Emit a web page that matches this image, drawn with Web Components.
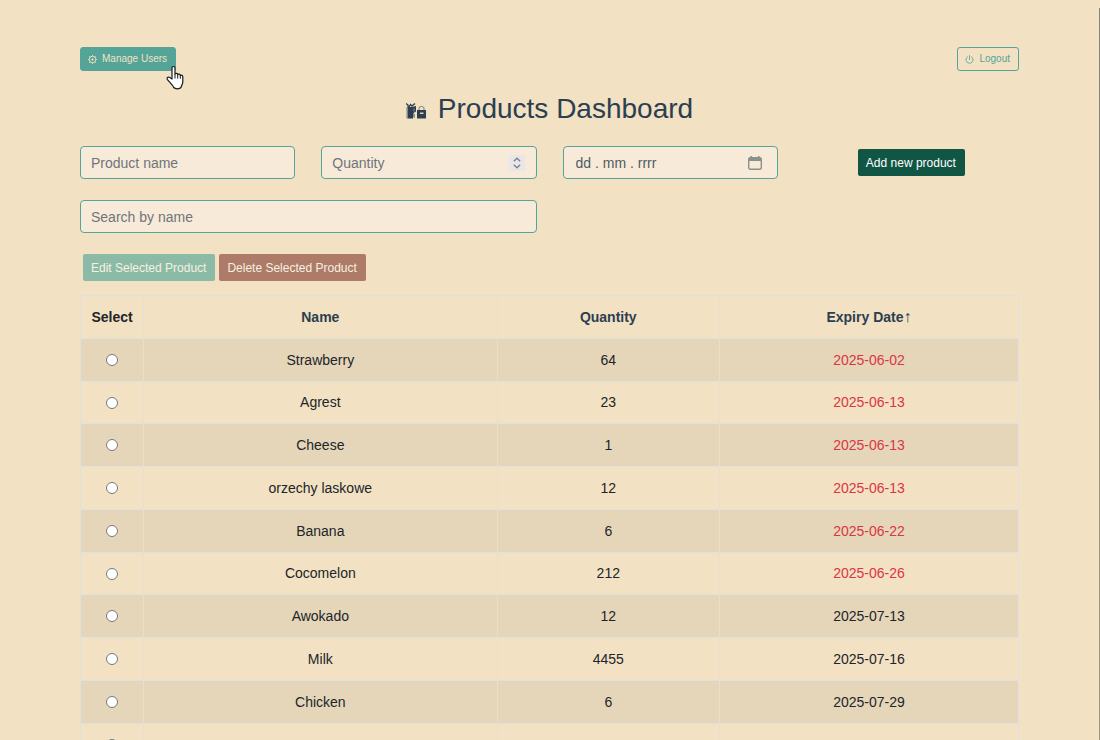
<!DOCTYPE html>
<html lang="en">
<head>
<meta charset="utf-8">
<meta name="viewport" content="width=device-width, initial-scale=1">
<title>Products Dashboard</title>
<style>
  html { height: 100%; overflow: hidden; }
  body {
    margin: 0;
    min-height: 100%;
    background: #f2e1c3;
    color: #212529;
    font-family: "Liberation Sans", Arial, sans-serif;
    font-size: 14px;
    line-height: 21px;
    --teal: #54a597;
    --navy: #2c3e50;
    --field: #f8ead9;
    --line: #dee0e1;
    --line-soft: #e9dfcd;
  }
</style>
</head>
<body>
<products-page></products-page>

<template id="page-template">
  <style>
    :host { display: block; padding: 47px 81px 0 80px; }
    header { display: flex; justify-content: space-between; position: relative; }
    h1 {
      display: flex; justify-content: center; align-items: center; gap: 12px;
      margin: 20px 0; font-size: 28px; line-height: 35px; font-weight: 400; color: var(--navy);
    }
    h1 svg { width: 20px; height: 17px; margin-top: 4px; }
    form { display: grid; grid-template-columns: repeat(4, minmax(0, 1fr)); column-gap: 26px; row-gap: 21px; align-items: center; }
    form action-button { justify-self: center; }
    .search { grid-column: span 2; }
    .actions { display: flex; gap: 4px; padding: 21px 3px 14px; }
    .pointer { position: absolute; left: 86px; top: 18px; width: 18px; height: 26px; }
    .rail { position: fixed; right: 0; top: 8px; bottom: 0; width: 1px; background: linear-gradient(#89847b 392px, #9b957f 392px); }
  </style>
  <header>
    <action-button kind="solid">
      <svg slot="icon" viewBox="0 0 16 16" width="9" height="9" fill="none" stroke="currentColor"><circle cx="8" cy="8" r="5.800" stroke-width="1.700"/><circle cx="8" cy="8" r="1.500" fill="currentColor" stroke-width="1"/><path stroke-width="1.500" d="M8 0v2M8 14v2M0 8h2M14 8h2M2.300 2.300l1.500 1.500M12.200 12.200l1.500 1.500M2.300 13.700l1.500-1.500M12.200 3.800l1.500-1.500"/></svg>
      Manage Users
    </action-button>
    <action-button kind="outline">
      <svg slot="icon" viewBox="0 0 16 16" width="9" height="9" fill="none" stroke="currentColor" stroke-width="1.500" stroke-linecap="round"><path d="M8 1v7M4.500 3a6.300 6.300 0 1 0 7 0"/></svg>
      Logout
    </action-button>
    <svg class="pointer" viewBox="0 0 18 26" aria-hidden="true"><path d="M6 14V3.300C6 .9 9 .9 9 3.300V9c.6-1 2.500-.8 2.700.5.900-.8 2.500-.4 2.600.9 1-.5 2.500 0 2.500 1.400V17c0 2.500-1.600 3.400-1.800 5.500-1.500 1.700-5.800 1.700-7.300 0C7 20.300 3.300 17 1.300 14.300.5 12.500 2.500 11.400 3.900 12.600z" fill="#fff" stroke="#16191f" stroke-width="1.200" stroke-linejoin="round"/><path d="M9 9v4.500M11.700 9.500v4M14.300 10.400v3.300" fill="none" stroke="#16191f"/></svg>
  </header>
  <h1>
    <svg viewBox="0 0 20 17" aria-hidden="true"><path d="M1.500 5H7v11.500H1.500z" fill="#2c3e50"/><path d="M0 1.500l2 1.500v2M3 5l1.500-2.500L6 4l3-2.500" fill="none" stroke="#2c3e50" stroke-width="1.300"/><path d="M1 5v11.500" stroke="#7c8380"/><path d="M6 5l4-1v5.500L7.500 11v4L6 16.500z" fill="#2c3e50"/><path d="M8 6.500v3M8.500 12v4" stroke="#8b9188"/><path d="M11 8h9v8.500h-9z" fill="#2c3e50"/><path d="M13 8V6q2.500-3.500 5 0v2" fill="none" stroke="#8b9188" stroke-width="1.200"/><path d="M14 10.500h3.500V12H14z" fill="#d8d4c2"/></svg>
    <span>Products Dashboard</span>
  </h1>
  <form>
    <text-field label="Product name"></text-field>
    <text-field label="Quantity" type="number">
      <svg slot="end" width="16" height="16" viewBox="0 0 16 16" fill="none" stroke="#7f8186" stroke-width="1.300" style="background:#e8e6e9"><path d="M4.800 6.200L8 3.200l3.200 3M4.800 9.800L8 12.800l3.200-3"/></svg>
    </text-field>
    <text-field label="dd . mm . rrrr" kind="date">
      <svg slot="end" width="14" height="14" viewBox="0 0 14 14"><rect x=".7" y="1.700" width="12.600" height="11.600" rx="1.500" fill="none" stroke="#8c908c" stroke-width="1.400"/><path d="M1 2h12v3H1zM2.500 0H4v2H2.500zM10 0h1.500v2H10z" fill="#8c908c"/></svg>
    </text-field>
    <action-button kind="add">Add new product</action-button>
    <text-field class="search" label="Search by name"></text-field>
  </form>
  <div class="actions">
    <action-button kind="edit">Edit Selected Product</action-button>
    <action-button kind="delete">Delete Selected Product</action-button>
  </div>
  <product-table></product-table>
  <div class="rail"></div>
</template>

<template id="button-template">
  <style>
    :host { display: block; }
    button {
      display: flex; align-items: center; gap: 5px; margin: 0;
      padding: 0 9px 0 8px; height: 27px; border: 0; border-radius: 2px;
      font: 12px/18px "Liberation Sans", Arial, sans-serif; color: #f8f0e0; white-space: nowrap; cursor: pointer;
    }
    :host([kind="solid"]) button, :host([kind="outline"]) button {
      height: 24px; padding: 0 8px 0 7px; border: 1px solid var(--teal); border-radius: 3px; font-size: 10px;
    }
    :host([kind="solid"]) button { background: var(--teal); color: #f2e1c3; }
    :host([kind="outline"]) button { background: transparent; color: var(--teal); }
    :host([kind="add"]) button { background: #115645; color: #fff; }
    :host([kind="edit"]) button { background: #8bbba7; }
    :host([kind="delete"]) button { background: #ad7b68; }
  </style>
  <button type="button"><slot name="icon"></slot><span><slot></slot></span></button>
</template>

<template id="field-template">
  <style>
    :host { display: block; }
    label {
      display: flex; align-items: center; box-sizing: border-box; height: 33px; padding: 0 11px 0 10px;
      border: 1px solid var(--teal); border-radius: 4px; background: var(--field);
    }
    input {
      flex: 1; min-width: 0; padding: 2px 0 0; border: 0; outline: 0; background: transparent; color: #495057;
      font: 14px/21px "Liberation Sans", Arial, sans-serif; appearance: textfield;
    }
    input::placeholder { color: #6f757b; opacity: 1; }
    input::-webkit-inner-spin-button { appearance: none; margin: 0; }
    ::slotted(svg) { display: block; }
    :host([kind="date"]) label { padding: 0 15px 0 12px; }
    :host([kind="date"]) input::placeholder { color: #4c5d62; }
  </style>
  <label><input><slot name="end"></slot></label>
</template>

<template id="table-template">
  <style>
    :host { display: block; }
    table { width: 100%; table-layout: fixed; border-collapse: collapse; text-align: center; }
    th, td { box-sizing: border-box; height: 43px; padding: 0; border: 1px solid var(--line); }
    tbody tr:nth-child(4n+2) td { height: 42px; }
    th { color: var(--navy); font-weight: 700; }
    th:first-child { color: #212529; }
    th span { font-size: 16px; font-weight: 400; }
    th:not(:last-child), td:not(:last-child) { border-right-color: var(--line-soft); }
    th + th, td + td { border-left-color: var(--line-soft); }
    tbody tr:nth-child(odd) { background: #e5d6b9; }
    .late { color: #dc3545; }
    input { display: block; width: 12px; height: 12px; margin: 0 auto; }
    .pick { width: 63px; }
    .name { width: 37.7%; }
    .quantity { width: 23.7%; }
  </style>
  <table>
    <colgroup><col class="pick"><col class="name"><col class="quantity"><col></colgroup>
    <thead><tr><th>Select</th><th>Name</th><th>Quantity</th><th>Expiry Date<span>↑</span></th></tr></thead>
    <tbody></tbody>
  </table>
</template>

<script>
  const stamp = (host, id) => {
    const root = host.attachShadow({ mode: "open" });
    root.append(document.getElementById(id).content.cloneNode(true));
    return root;
  };

  customElements.define("action-button", class extends HTMLElement {
    constructor() { super(); stamp(this, "button-template"); }
  });

  customElements.define("text-field", class extends HTMLElement {
    connectedCallback() {
      if (this.shadowRoot) return;
      const input = stamp(this, "field-template").querySelector("input");
      const label = this.getAttribute("label");
      input.type = this.getAttribute("type") || "text";
      input.placeholder = label;
      input.setAttribute("aria-label", label);
    }
  });

  const products = [
    ["Strawberry", 64, "2025-06-02", true],
    ["Agrest", 23, "2025-06-13", true],
    ["Cheese", 1, "2025-06-13", true],
    ["orzechy laskowe", 12, "2025-06-13", true],
    ["Banana", 6, "2025-06-22", true],
    ["Cocomelon", 212, "2025-06-26", true],
    ["Awokado", 12, "2025-07-13"],
    ["Milk", 4455, "2025-07-16"],
    ["Chicken", 6, "2025-07-29"],
    ["", "", ""]
  ];

  customElements.define("product-table", class extends HTMLElement {
    connectedCallback() {
      if (this.shadowRoot) return;
      stamp(this, "table-template").querySelector("tbody").innerHTML = products.map(([name, quantity, date, late]) =>
        `<tr><td><input type="radio" name="product" aria-label="Select ${name}"></td><td>${name}</td><td>${quantity}</td><td${late ? ' class="late"' : ""}>${date}</td></tr>`
      ).join("");
    }
  });

  customElements.define("products-page", class extends HTMLElement {
    connectedCallback() { if (!this.shadowRoot) stamp(this, "page-template"); }
  });
</script>
</body>
</html>
